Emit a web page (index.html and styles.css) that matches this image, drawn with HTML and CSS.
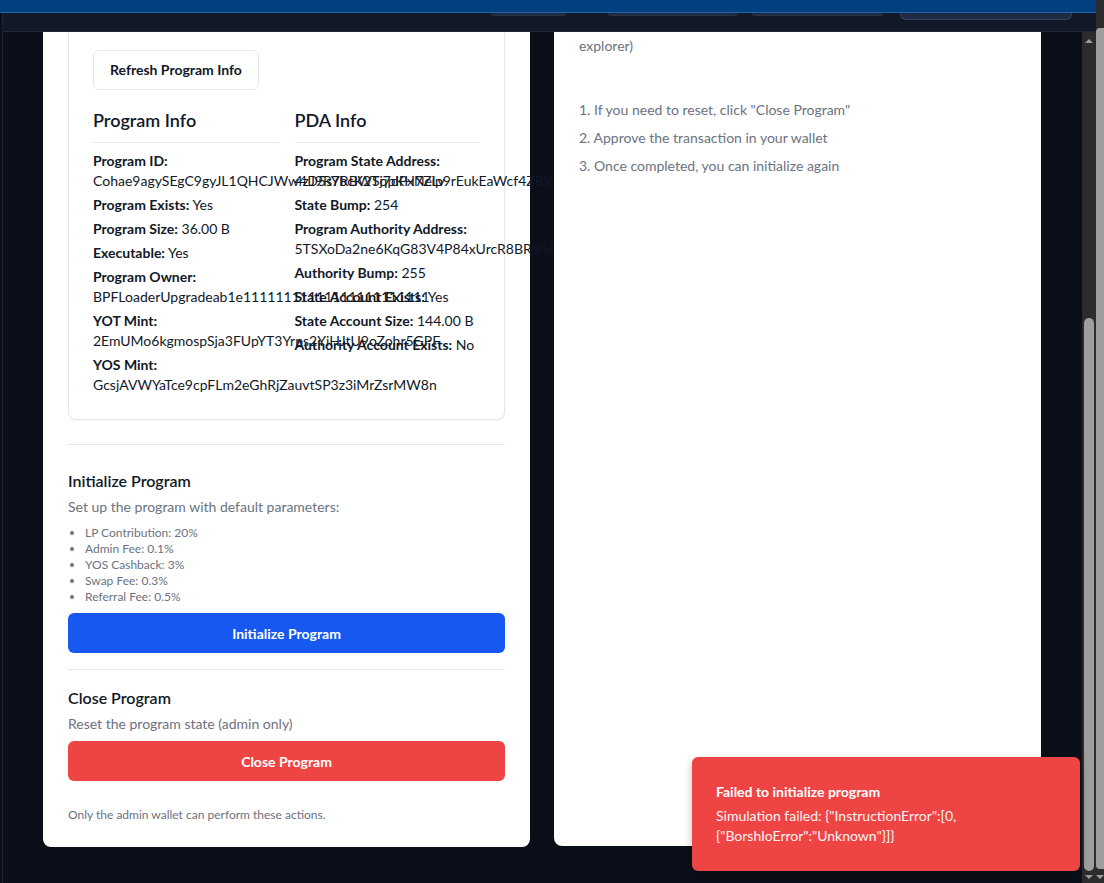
FILE: index.html
```html
<!DOCTYPE html>
<html lang="en">
<head>
<meta charset="utf-8">
<title>Program Admin</title>
<link rel="stylesheet" href="styles.css">
</head>
<body>
<div class="window">
  <div class="frame">
    <div class="topbar"></div>
    <header class="header">
      <div class="hbtn hbtn-1"></div>
      <div class="hbtn hbtn-2"></div>
      <div class="hbtn hbtn-3"></div>
      <div class="hbtn hbtn-wallet"></div>
    </header>
    <div class="viewport">
      <main class="content">
        <section class="card card-left">
          <div class="info-box">
            <button class="btn-outline">Refresh Program Info</button>
            <div class="info-grid">
              <div class="info-col">
                <h2 class="info-title">Program Info</h2>
                <div class="info-list">
                  <div class="item"><div class="label">Program ID:</div><div class="value">Cohae9agySEgC9gyJL1QHCJWw4D5sYbcK2Tj7dPxNeLv</div></div>
                  <div class="item"><span class="label">Program Exists:</span> Yes</div>
                  <div class="item"><span class="label">Program Size:</span> 36.00 B</div>
                  <div class="item"><span class="label">Executable:</span> Yes</div>
                  <div class="item"><div class="label">Program Owner:</div><div class="value">BPFLoaderUpgradeab1e11111111111111111111111</div></div>
                  <div class="item"><div class="label">YOT Mint:</div><div class="value">2EmUMo6kgmospSja3FUpYT3Yrps2YiHJtU9oZohr5GPF</div></div>
                  <div class="item"><div class="label">YOS Mint:</div><div class="value">GcsjAVWYaTce9cpFLm2eGhRjZauvtSP3z3iMrZsrMW8n</div></div>
                </div>
              </div>
              <div class="info-col">
                <h2 class="info-title">PDA Info</h2>
                <div class="info-list">
                  <div class="item"><div class="label">Program State Address:</div><div class="value">4zJ9R7RBWSqpKH7Zip9rEukEaWcf4ZBKFq3vNp</div></div>
                  <div class="item"><span class="label">State Bump:</span> 254</div>
                  <div class="item"><div class="label">Program Authority Address:</div><div class="value">5TSXoDa2ne6KqG83V4P84xUrcR8BRohAFm2kYt</div></div>
                  <div class="item"><span class="label">Authority Bump:</span> 255</div>
                  <div class="item"><span class="label">State Account Exists:</span> Yes</div>
                  <div class="item"><span class="label">State Account Size:</span> 144.00 B</div>
                  <div class="item"><span class="label">Authority Account Exists:</span> No</div>
                </div>
              </div>
            </div>
          </div>

          <div class="section section-init">
            <h3 class="section-title">Initialize Program</h3>
            <p class="section-text">Set up the program with default parameters:</p>
            <ul class="params">
              <li>LP Contribution: 20%</li>
              <li>Admin Fee: 0.1%</li>
              <li>YOS Cashback: 3%</li>
              <li>Swap Fee: 0.3%</li>
              <li>Referral Fee: 0.5%</li>
            </ul>
            <button class="btn btn-primary">Initialize Program</button>
          </div>

          <div class="section section-close">
            <h3 class="section-title">Close Program</h3>
            <p class="section-text section-text-close">Reset the program state (admin only)</p>
            <button class="btn btn-danger">Close Program</button>
          </div>

          <p class="note">Only the admin wallet can perform these actions.</p>
        </section>

        <section class="card card-right">
          <p class="help-text help-top">explorer)</p>
          <ol class="steps">
            <li>1. If you need to reset, click "Close Program"</li>
            <li>2. Approve the transaction in your wallet</li>
            <li>3. Once completed, you can initialize again</li>
          </ol>
        </section>
      </main>
      <div class="scrollbar inner-scroll">
        <div class="arrow arrow-up"></div>
        <div class="track"><div class="thumb inner-thumb"></div></div>
        <div class="arrow arrow-down"></div>
      </div>
    </div>
    <div class="toast">
      <div class="toast-title">Failed to initialize program</div>
      <div class="toast-body">Simulation failed: {"InstructionError":[0, {"BorshIoError":"Unknown"}]}</div>
    </div>
  </div>
  <div class="scrollbar outer-scroll">
    <div class="outer-thumb"></div>
    <div class="arrow arrow-down"></div>
  </div>
</div>
</body>
</html>
```
FILE: styles.css
```css
* { box-sizing: border-box; }
html, body { margin: 0; padding: 0; height: 100%; }
body {
  font-family: Lato, "Segoe UI", sans-serif;
  background: #0b0f19;
  color: #111827;
  overflow: hidden;
}
.window { display: flex; width: 1104px; height: 883px; }
.frame {
  position: relative;
  height: 883px;
  display: flex;
  flex-direction: column;
  border-left: 1px solid #1c2333;
  margin-left: 2px;
  width: 1094px;
}
.topbar {
  height: 13px;
  background: #00407f;
  border-bottom: 1px solid #2563a8;
  margin-left: -3px;
  flex: none;
}
.header {
  flex: none;
  height: 19px;
  background: #111827;
  border-bottom: 1px solid #1f2937;
  display: flex;
  align-items: flex-start;
  padding-left: 488px;
}
.hbtn {
  height: 3px;
  background: #1e293b;
  border: 1px solid #263247;
  border-top: none;
  border-radius: 0 0 6px 6px;
}
.hbtn-1 { width: 75px; }
.hbtn-2 { width: 130px; margin-left: 42px; }
.hbtn-3 { width: 131px; margin-left: 14px; }
.hbtn-wallet { width: 172px; height: 7px; margin-left: 17px; background: #1e2a44; border-color: #33415e; }

.viewport { flex: 1; display: flex; min-height: 0; }
.content {
  flex: 1;
  display: flex;
  align-items: flex-start;
  gap: 24px;
  padding-left: 40px;
}
.card {
  width: 487px;
  background: #ffffff;
  border-radius: 0 0 8px 8px;
  padding: 0 25px;
}
.card-left { padding-bottom: 24px; }
.card-right { height: 814px; padding-top: 4px; }

.info-box {
  border: 1px solid #e5e7eb;
  border-top: none;
  border-radius: 0 0 8px 8px;
  padding: 18px 24px 24px;
  box-shadow: 0 1px 2px rgba(0,0,0,0.04);
}
.btn-outline {
  font-family: inherit;
  font-size: 14px;
  font-weight: 700;
  color: #111827;
  background: #fff;
  border: 1px solid #e5e7eb;
  border-radius: 6px;
  height: 40px;
  padding: 0 16px 1px;
}
.info-grid {
  display: grid;
  grid-template-columns: 1fr 1fr;
  gap: 16px;
  margin-top: 16px;
}
.info-col { min-width: 0; }
.info-title {
  margin: 0;
  font-size: 18px;
  line-height: 28px;
  font-weight: 600;
  color: #111827;
  padding-bottom: 8px;
  border-bottom: 1px solid #e5e7eb;
}
.info-list { margin-top: 8px; display: flex; flex-direction: column; gap: 4px; font-size: 14px; line-height: 20px; }
.item { white-space: nowrap; color: #111827; }
.label { font-weight: 700; }
.value { white-space: nowrap; }

.section { border-top: 1px solid #e5e7eb; }
.section-init { margin-top: 24px; padding-top: 24px; }
.section-close { margin-top: 16px; padding-top: 16px; }
.section-title {
  margin: 0 0 4px;
  font-size: 16px;
  line-height: 24px;
  font-weight: 600;
  color: #111827;
}
.section-text {
  margin: 0 0 8px;
  font-size: 14px;
  line-height: 20px;
  color: #6b7280;
}
.section-text-close { margin-bottom: 7px; }
.params {
  margin: 0 0 8px;
  padding-left: 17px;
  font-size: 12px;
  line-height: 16px;
  color: #6b7280;
  list-style: disc;
}
.btn {
  display: block;
  width: 100%;
  height: 40px;
  border: none;
  border-radius: 6px;
  font-family: inherit;
  font-size: 14px;
  font-weight: 700;
  color: #fff;
}
.btn-primary { background: #1658f0; }
.btn-danger { background: #ef4444; }
.note {
  margin: 26px 0 0;
  font-size: 12px;
  line-height: 16px;
  color: #6b7280;
}

.help-text { margin: 0; font-size: 14px; line-height: 20px; color: #6b7280; }
.steps { list-style: none; margin: 44px 0 0; padding: 0; font-size: 14px; line-height: 20px; color: #6b7280; }
.steps li { margin-bottom: 8px; }

.scrollbar { background: #2c2c2c; flex: none; display: flex; flex-direction: column; align-items: center; }
.inner-scroll { width: 14px; }
.arrow { width: 0; height: 0; border-left: 4px solid transparent; border-right: 4px solid transparent; }
.arrow-up { border-bottom: 4px solid #9e9e9e; margin-top: 7px; }
.arrow-down { border-top: 4px solid #9e9e9e; margin-bottom: 4px; }
.track { flex: 1; width: 100%; display: flex; flex-direction: column; align-items: center; padding-bottom: 4px; }
.inner-thumb { margin-top: 275px; width: 10px; flex: 1; background: #9e9e9e; border-radius: 5px; }
.outer-scroll { width: 8px; padding-top: 28px; }
.outer-thumb { width: 8px; flex: 1; background: #9e9e9e; border-radius: 4px 0 0 4px; margin-bottom: 6px; }

.toast {
  position: absolute;
  left: 689px;
  top: 757px;
  width: 388px;
  height: 114px;
  background: #ef4444;
  border-radius: 6px;
  padding: 24px 24px;
  color: #fff;
  box-shadow: 0 4px 10px rgba(0,0,0,0.25);
}
.toast-title { font-size: 14px; line-height: 20px; font-weight: 700; margin-top: 1px; }
.toast-body { font-size: 14px; line-height: 20px; margin-top: 4px; opacity: 0.95; }
```
